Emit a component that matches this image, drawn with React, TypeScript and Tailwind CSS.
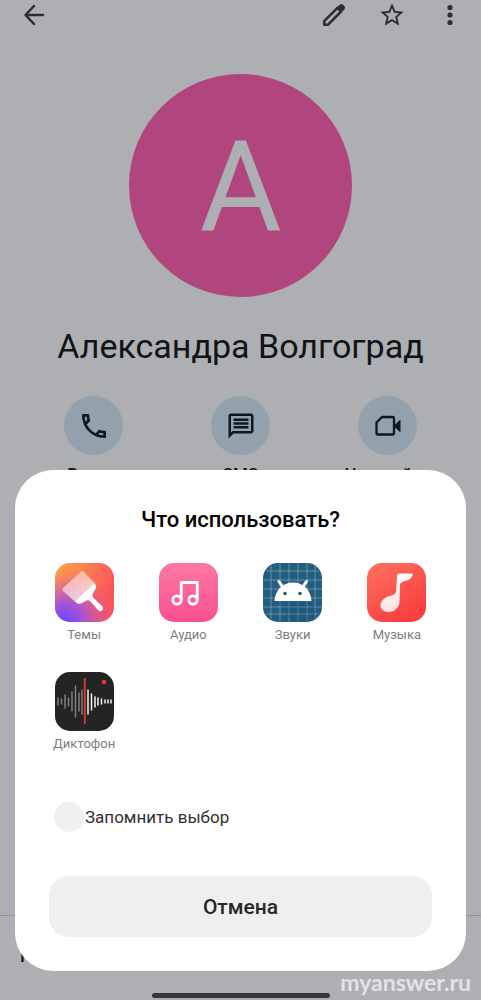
import React, { useState } from 'react'

type App = {
  name: string
  icon: React.ReactNode
}

type QuickAction = {
  label: string
  icon: React.ReactNode
}

function ThemesIcon() {
  return (
    <svg viewBox="0 0 59 59" className="size-[59px]" aria-hidden="true">
      <defs>
        <linearGradient id="themesBase" x1="0" y1="0" x2="1" y2="0.4">
          <stop offset="0" stopColor="#fba648" />
          <stop offset="1" stopColor="#f9555c" />
        </linearGradient>
        <radialGradient id="themesGlow" cx="0.15" cy="1" r="0.9">
          <stop offset="0" stopColor="#6248ff" />
          <stop offset="0.35" stopColor="#954cf0" stopOpacity="0.85" />
          <stop offset="1" stopColor="#f0508c" stopOpacity="0" />
        </radialGradient>
        <linearGradient id="themesBrush" x1="0.2" y1="0" x2="0.8" y2="0.9">
          <stop offset="0" stopColor="#fff" stopOpacity="0.4" />
          <stop offset="1" stopColor="#fff" stopOpacity="0.75" />
        </linearGradient>
      </defs>
      <rect width="59" height="59" rx="15" fill="url(#themesBase)" />
      <rect width="59" height="59" rx="15" fill="url(#themesGlow)" />
      <path d="M8 25 26 8.500Q27.500 7.500 29 9L40.500 21 20.500 39 8 28Q6.500 26.500 8 25Z" fill="url(#themesBrush)" />
      <path d="M39.500 20.500 20 38.500Q23 42 26 40.500L31.500 37.500Q34 36.500 36 39L43 47Q45 49 47 47.500 49 45.500 47 43L39 35.500Q36.500 33 38 30L40.500 26Q42 23 39.500 20.500Z" fill="#fff" />
    </svg>
  )
}

function AudioIcon() {
  return (
    <svg viewBox="0 0 59 59" className="size-[59px]" aria-hidden="true">
      <defs>
        <linearGradient id="audioBase" x1="0" y1="0" x2="0" y2="1">
          <stop offset="0" stopColor="#fb78a4" />
          <stop offset="1" stopColor="#fb5090" />
        </linearGradient>
      </defs>
      <rect width="59" height="59" rx="15" fill="url(#audioBase)" />
      <g fill="none" stroke="#fff" strokeWidth="2.800">
        <circle cx="18" cy="37" r="4.200" />
        <circle cx="34" cy="37" r="4.200" />
        <path d="M22.200 37V19.500H38.200V37" strokeLinejoin="round" />
      </g>
    </svg>
  )
}

function SoundsIcon() {
  return (
    <svg viewBox="0 0 59 59" className="size-[59px]" aria-hidden="true">
      <rect width="59" height="59" rx="15" fill="#235d80" />
      <path
        d="M8 3V56M17 0V59M26 0V59M35 0V59M44 0V59M52 3V56M3 8H56M0 17H59M0 26H59M0 35H59M0 44H59M3 51H56"
        stroke="#7fa6ba"
        strokeWidth="0.700"
      />
      <path d="M14 39H48L52 44V56Q48 59 44 59H29Z" fill="#184b6b" opacity="0.25" />
      <path d="M16 18.500 20.500 25M43.500 18.500 39 25" stroke="#fff" strokeWidth="3" strokeLinecap="round" />
      <path d="M11.500 38C12 27.500 19.500 19.500 30 19.500S48 27.500 48.500 38Z" fill="#fff" />
      <circle cx="22" cy="30.500" r="1.800" fill="#235d80" />
      <circle cx="37" cy="30.500" r="1.800" fill="#235d80" />
    </svg>
  )
}

function MusicIcon() {
  return (
    <svg viewBox="0 0 59 59" className="size-[59px]" aria-hidden="true">
      <defs>
        <linearGradient id="musicBase" x1="0" y1="0" x2="0.6" y2="1">
          <stop offset="0" stopColor="#ff7262" />
          <stop offset="1" stopColor="#f93f3f" />
        </linearGradient>
        <linearGradient id="musicNote" x1="0" y1="0" x2="0" y2="1">
          <stop offset="0" stopColor="#fff" />
          <stop offset="1" stopColor="#ffe4e0" />
        </linearGradient>
      </defs>
      <rect width="59" height="59" rx="15" fill="url(#musicBase)" />
      <path
        d="M30 13.500Q30 10.500 33 10.500H44.500Q46.500 10.500 45.500 12.500 43.500 17 38 18 33 19 33 22.500L32.500 39C32 45 27 49 21.500 49 16.500 49 13.500 46 13.500 42.500 13.500 37.500 18.500 33.500 24.500 32.500Q29 31.500 29 28Z"
        fill="url(#musicNote)"
      />
    </svg>
  )
}

function RecorderIcon() {
  return (
    <svg viewBox="0 0 59 59" className="size-[59px]" aria-hidden="true">
      <rect width="59" height="59" rx="15" fill="#242424" />
      <path
        d="M3 26V33M6.500 27V32M10 23V36M13.500 26V34M17 20V39M20.500 14V45M24 21V39M27 18V42"
        stroke="#858585"
        strokeWidth="1.400"
        strokeLinecap="round"
      />
      <path
        d="M33 18V42M36.500 22V38M40 25V35M43 26V33M46.500 27V32M50 28V31M53 28V31M56 28V31"
        stroke="#fff"
        strokeWidth="1.400"
        strokeLinecap="round"
      />
      <path d="M29.800 6V52" stroke="#e03c31" strokeWidth="1.800" />
      <circle cx="49" cy="10" r="2.300" fill="#e8372c" />
    </svg>
  )
}

const apps: App[] = [
  { name: 'Темы', icon: <ThemesIcon /> },
  { name: 'Аудио', icon: <AudioIcon /> },
  { name: 'Звуки', icon: <SoundsIcon /> },
  { name: 'Музыка', icon: <MusicIcon /> },
  { name: 'Диктофон', icon: <RecorderIcon /> },
]

const actions: QuickAction[] = [
  {
    label: 'Вызов',
    icon: (
      <svg viewBox="0 0 24 24" className="size-8" fill="currentColor" aria-hidden="true">
        <path d="M6.540 5c.06.89.21 1.760.45 2.590l-1.200 1.200c-.41-1.200-.67-2.470-.76-3.790h1.510m9.860 12.020c.85.24 1.720.39 2.600.45v1.490c-1.320-.09-2.590-.35-3.800-.75l1.200-1.190M7.500 3H4c-.55 0-1 .45-1 1 0 9.390 7.610 17 17 17 .55 0 1-.45 1-1v-3.490c0-.55-.45-1-1-1-1.240 0-2.450-.2-3.570-.57a.84.84 0 0 0-.31-.05c-.26 0-.51.1-.71.29l-2.200 2.200a15.150 15.150 0 0 1-6.590-6.590l2.200-2.200c.28-.28.36-.67.25-1.020A11.360 11.360 0 0 1 8.500 4c0-.55-.45-1-1-1z" />
      </svg>
    ),
  },
  {
    label: 'SMS',
    icon: (
      <svg viewBox="0 0 24 24" className="size-[30px]" fill="currentColor" aria-hidden="true">
        <path d="M4 4h16v12H5.170L4 17.170V4m0-2c-1.100 0-1.990.9-1.990 2L2 22l4-4h14c1.100 0 2-.9 2-2V4c0-1.100-.9-2-2-2H4zm2 10h12v2H6v-2zm0-3h12v2H6V9zm0-3h12v2H6V6z" />
      </svg>
    ),
  },
  {
    label: 'Настройка',
    icon: (
      <svg viewBox="0 0 30 30" className="size-[30px]" aria-hidden="true">
        <path d="M9 6H19.500Q21 6 21 7.500V22Q21 23.500 19.500 23.500H5Q3.500 23.500 3.500 22V11.500Z" fill="none" stroke="currentColor" strokeWidth="2.300" strokeLinejoin="round" />
        <path d="M20.500 15 27.500 8.500V21.500Z" fill="currentColor" />
      </svg>
    ),
  },
]

const iconButton = 'flex size-8 items-center justify-center text-[#2b2e32]'

function ContactPage() {
  return (
    <div className="flex min-h-screen flex-col bg-[#adafb2] text-[#101418]">
      <header className="flex h-[30px] items-center justify-between pr-[15px] pl-[18px]">
        <button type="button" aria-label="Назад" className={iconButton}>
          <svg viewBox="0 0 24 24" className="size-6" fill="none" stroke="currentColor" strokeWidth="2.500" strokeLinecap="round" strokeLinejoin="round" aria-hidden="true">
            <path d="M21 12H3.500M12 3 3.500 12l8.500 9" />
          </svg>
        </button>
        <div className="flex items-center gap-[26px]">
          <button type="button" aria-label="Изменить" className={iconButton}>
            <svg viewBox="0 0 24 24" className="size-6" aria-hidden="true">
              <path d="M2.200 18.200 15.500 4.900 19.100 8.500 5.800 21.800H2.200Z" fill="none" stroke="currentColor" strokeWidth="2.500" strokeLinejoin="round" />
              <path d="M14 5 18 1.500Q19.500.3 21 1.800L22.500 3.300Q23.800 4.800 22.500 6.200L19 10Z" fill="currentColor" />
            </svg>
          </button>
          <button type="button" aria-label="В избранное" className={iconButton}>
            <svg viewBox="0 0 24 24" className="size-7" fill="currentColor" aria-hidden="true">
              <path d="m22 9.240-7.190-.62L12 2 9.190 8.630 2 9.240l5.460 4.730L5.820 21 12 17.270 18.180 21l-1.630-7.030L22 9.240zM12 15.400l-3.760 2.270 1-4.280-3.320-2.880 4.380-.38L12 6.100l1.710 4.040 4.380.38-3.320 2.880 1 4.280L12 15.400z" />
            </svg>
          </button>
          <button type="button" aria-label="Ещё" className={iconButton}>
            <svg viewBox="0 0 24 24" className="size-6" fill="currentColor" aria-hidden="true">
              <circle cx="12" cy="4.500" r="2.600" />
              <circle cx="12" cy="12" r="2.600" />
              <circle cx="12" cy="19.500" r="2.600" />
            </svg>
          </button>
        </div>
      </header>

      <div className="mt-11 flex size-[223px] items-center justify-center self-center rounded-full bg-[#b1467f] pt-1">
        <span className="text-[126px] leading-none text-[#adafb2]">А</span>
      </div>
      <h1 className="mt-[29px] text-center text-[34px] leading-[40px]">Александра Волгоград</h1>

      <div className="mt-[30px] grid grid-cols-3 px-5">
        {actions.map(action => (
          <button key={action.label} type="button" className="flex flex-col items-center gap-2">
            <span className="flex size-[59px] items-center justify-center rounded-full bg-[#92a1ab] text-[#0b1a22]">
              {action.icon}
            </span>
            <span className="text-[17px] leading-[22px] font-medium">{action.label}</span>
          </button>
        ))}
      </div>

      <section className="mt-auto h-[85px] border-t border-[#8d9094] px-5 pt-7">
        <h2 className="text-lg leading-6 font-medium">Контактная информация</h2>
      </section>
    </div>
  )
}

export default function App() {
  const [remember, setRemember] = useState(false)

  return (
    <div className="relative font-[Roboto,sans-serif]">
      <ContactPage />

      <div
        role="dialog"
        aria-labelledby="chooser-title"
        className="absolute inset-x-[15px] bottom-[29px] rounded-[38px] bg-white px-[34px] pt-9 pb-[34px]"
      >
        <h2 id="chooser-title" className="text-center text-[22px] leading-7 font-medium text-black">
          Что использовать?
        </h2>
        <div className="-mx-[17px] mt-[29px] grid grid-cols-4 gap-y-7">
          {apps.map(app => (
            <button key={app.name} type="button" className="flex flex-col items-center gap-1">
              {app.icon}
              <span className="text-[13px] leading-[18px] text-[#7d7d7d]">{app.name}</span>
            </button>
          ))}
        </div>

        <label className="mt-[49px] flex items-center pl-[5px] text-[17px] leading-[30px] text-[#303030]">
          <input
            type="checkbox"
            checked={remember}
            onChange={e => setRemember(e.target.checked)}
            className="mr-px size-[30px] appearance-none rounded-full bg-[#f0f0f0] checked:bg-[#2f80ed]"
          />
          Запомнить выбор
        </label>

        <button
          type="button"
          className="mt-11 h-[61px] w-full rounded-[20px] bg-[#efefef] pt-0.5 text-[21px] font-medium text-[#262626]"
        >
          Отмена
        </button>
      </div>

      <div className="absolute bottom-0.5 left-1/2 h-[5px] w-[178px] -translate-x-1/2 rounded-full bg-[#363739]" />
      <div className="absolute right-[10px] bottom-1 font-[Lato,sans-serif] text-[23px] leading-7 font-bold text-white/65">
        myanswer.ru
      </div>
    </div>
  )
}
